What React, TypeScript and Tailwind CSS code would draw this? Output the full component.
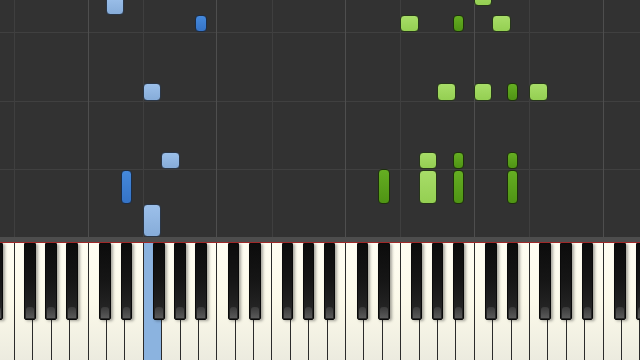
import React from "react";

const KEY = 18.4;
const ORIGIN = 14; // left edge of the first full F key

// black key offset from the boundary of the white key to its right (by white key index mod 7)
const BLACK_OFFSET: Record<number, number> = { 1: -8.2, 2: -5.6, 3: -2.9, 5: -7, 6: -3.9 };
const BLACK_W = 11.6;

const wx = (k: number) => ORIGIN + KEY * k;
const bx = (k: number) => wx(k) + BLACK_OFFSET[((k % 7) + 7) % 7];

type Note = { k: number; black?: boolean; top: number; bottom: number; tone: "blue" | "green" };

const notes: Note[] = [
    // left hand (blue)
    { k: 5, top: -4, bottom: 14.5, tone: "blue" },
    { k: 10, black: true, top: 15, bottom: 32, tone: "blue" },
    { k: 7, top: 83, bottom: 100.7, tone: "blue" },
    { k: 8, top: 152, bottom: 169, tone: "blue" },
    { k: 6, black: true, top: 170, bottom: 203.5, tone: "blue" },
    { k: 7, top: 204, bottom: 237, tone: "blue" },
    // right hand (green)
    { k: 25, top: -12, bottom: 5.7, tone: "green" },
    { k: 21, top: 15, bottom: 32.3, tone: "green" },
    { k: 24, black: true, top: 15, bottom: 32.3, tone: "green" },
    { k: 26, top: 15, bottom: 32.3, tone: "green" },
    { k: 23, top: 83, bottom: 100.7, tone: "green" },
    { k: 25, top: 83, bottom: 100.7, tone: "green" },
    { k: 27, black: true, top: 83, bottom: 100.7, tone: "green" },
    { k: 28, top: 83, bottom: 100.7, tone: "green" },
    { k: 20, black: true, top: 169, bottom: 204, tone: "green" },
    { k: 22, top: 152, bottom: 169, tone: "green" },
    { k: 22, top: 169.5, bottom: 203.5, tone: "green" },
    { k: 24, black: true, top: 152, bottom: 169, tone: "green" },
    { k: 24, black: true, top: 169.5, bottom: 203.5, tone: "green" },
    { k: 27, black: true, top: 152, bottom: 169, tone: "green" },
    { k: 27, black: true, top: 169.5, bottom: 203.5, tone: "green" },
];

const noteClass = (n: Note) => {
    if (n.tone === "blue") {
        return n.black
            ? "bg-gradient-to-b from-[#4589dc] to-[#3573c6] border-[#1b2c44]"
            : "bg-gradient-to-b from-[#9cc0ea] to-[#86acd9] border-[#2a3646]";
    }
    return n.black
        ? "bg-gradient-to-b from-[#65ae22] to-[#4f9414] border-[#1d300c]"
        : "bg-gradient-to-b from-[#a8dd68] to-[#94cf52] border-[#26351a]";
};

// white keys from k = -1 (partial E) to k = 34
const whiteKeys = Array.from({ length: 36 }, (_, i) => i - 1);
const blackKeys = whiteKeys.filter((k) => BLACK_OFFSET[((k % 7) + 7) % 7] !== undefined);

const fLines = [0, 7, 14, 21, 28];
const cLines = [4, 11, 18, 25, 32];
const rows = [32, 100.5, 169];

function Roll() {
    return (
        <div className="relative h-[237px] bg-[#323232] overflow-hidden">
            {rows.map((y) => (
                <div key={y} className="absolute left-0 right-0 h-px bg-[#404040]" style={{ top: y }} />
            ))}
            {fLines.map((k) => (
                <div key={"f" + k} className="absolute top-0 bottom-0 w-px bg-[#3f3f3f]" style={{ left: wx(k) }} />
            ))}
            {cLines.map((k) => (
                <div key={"c" + k} className="absolute top-0 bottom-0 w-px bg-[#4e4e4e]" style={{ left: wx(k) }} />
            ))}
            {notes.map((n, i) => (
                <div
                    key={i}
                    className={`absolute rounded-[4px] border ${noteClass(n)}`}
                    style={{
                        left: n.black ? bx(n.k) : wx(n.k),
                        width: n.black ? BLACK_W : KEY,
                        top: n.top,
                        height: n.bottom - n.top,
                    }}
                />
            ))}
        </div>
    );
}

function Keyboard() {
    return (
        <div className="relative h-[117px] overflow-hidden bg-[#fdfbee]">
            <div className="flex h-full" style={{ marginLeft: wx(-1) }}>
                {whiteKeys.map((k) => (
                    <div
                        key={k}
                        className={`shrink-0 h-full border-l border-[#2b2b2b] ${
                            k === 7
                                ? "bg-[#8bb3df]"
                                : "bg-gradient-to-b from-[#fffdf2] via-[#fcfaea] to-[#ecebdf]"
                        }`}
                        style={{ width: KEY }}
                    />
                ))}
            </div>
            {blackKeys.map((k) => (
                <div
                    key={"b" + k}
                    className="absolute top-0 h-[77px] rounded-b-[2px] border border-[#0a0a0a] bg-gradient-to-b from-[#0c0c0c] via-[#161616] to-[#2a2a2a] shadow-[2px_1px_3px_rgba(0,0,0,0.35)]"
                    style={{ left: bx(k), width: BLACK_W }}
                >
                    <div className="absolute left-[1px] right-[1px] bottom-[1px] h-[11px] rounded-t-[3px] bg-gradient-to-b from-[#3a3a3a] to-[#5a5a5a]" />
                </div>
            ))}
        </div>
    );
}

export default function App() {
    return (
        <div className="w-[640px] h-[360px] overflow-hidden bg-[#323232]">
            <Roll />
            <div className="h-[5px] bg-[#4d4d4d]" />
            <div className="h-px bg-[#a02828]" />
            <Keyboard />
        </div>
    );
}
